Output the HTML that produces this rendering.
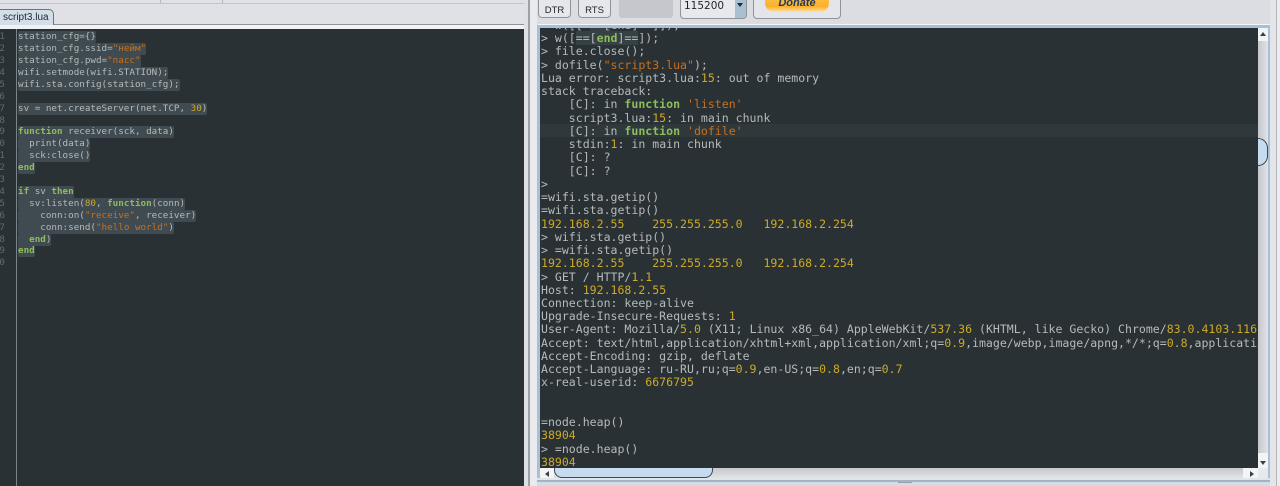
<!DOCTYPE html>
<html><head><meta charset="utf-8">
<style>
html,body{margin:0;padding:0;background:#dcdde3;width:1280px;height:486px;overflow:hidden}
.a{position:absolute}
#ed{left:0;top:29px;width:524px;height:457px;background:#293134;overflow:hidden}
#con{left:540px;top:28px;width:718px;height:440px;background:#293134;overflow:hidden}
.l,.g{position:absolute;white-space:pre;font-family:"DejaVu Sans Mono",monospace;color:#b6babA}
#ed .l{left:18px;font-size:9.25px;line-height:12px;height:12px;margin-top:1px;filter:blur(.35px)}
#ed .g{left:0;width:5px;text-align:right;font-size:9.25px;line-height:12px;margin-top:1px;color:#5f6b71;direction:rtl;overflow:hidden;filter:blur(.35px)}
#ed .s{background:#3f4b50;display:inline-block;height:12px;border-radius:2px}
#con .l{left:1px;font-size:11.55px;line-height:13px;height:13px;filter:blur(.35px)}
b{color:#8dbd5c;font-weight:bold}
i{font-style:normal;color:#c8701c}
u{text-decoration:none;color:#cdaa26}
em{font-style:normal;background:#364146}
</style></head><body>
<!-- top strip -->
<div class="a" style="left:0;top:0;width:524px;height:24px;background:#e0e1e6"></div>
<div class="a" style="left:0;top:3px;width:524px;height:1px;background:#c3c5ca"></div>
<div class="a" style="left:160px;top:0;width:1px;height:3px;background:#b4b6bb"></div>
<div class="a" style="left:222px;top:0;width:1px;height:3px;background:#b4b6bb"></div>
<div class="a" style="left:0;top:24px;width:524px;height:1px;background:#8f9297"></div>
<div class="a" style="left:0;top:25px;width:524px;height:4px;background:#f1f2f5"></div>
<!-- tab -->
<div class="a" style="left:-3px;top:9px;width:55px;height:15px;background:#d3deE8;border:1px solid #6f7378;border-bottom:none;border-radius:0 5px 0 0;font:10px/16px 'Liberation Sans',sans-serif;color:#1d2630;text-indent:5px;white-space:pre">script3.lua</div>
<!-- left editor -->
<div class="a" id="ed">
<div class="a" style="left:16px;top:0;width:1px;height:457px;background:#7b858a"></div>
<div class="g" style="top:1px">1</div><div class="g" style="top:13px">2</div><div class="g" style="top:25px">3</div><div class="g" style="top:37px">4</div><div class="g" style="top:49px">5</div><div class="g" style="top:61px">6</div><div class="g" style="top:73px">7</div><div class="g" style="top:85px">8</div><div class="g" style="top:96px">9</div><div class="g" style="top:108px">0</div><div class="g" style="top:120px">1</div><div class="g" style="top:132px">2</div><div class="g" style="top:144px">3</div><div class="g" style="top:156px">4</div><div class="g" style="top:168px">5</div><div class="g" style="top:180px">6</div><div class="g" style="top:192px">7</div><div class="g" style="top:204px">8</div><div class="g" style="top:215px">9</div><div class="g" style="top:227px">0</div>
<div class="l" style="top:1px"><span class="s">station_cfg={}</span></div>
<div class="l" style="top:13px"><span class="s">station_cfg.ssid=<i>"нейм"</i></span></div>
<div class="l" style="top:25px"><span class="s">station_cfg.pwd=<i>"пасс"</i></span></div>
<div class="l" style="top:37px"><span class="s">wifi.setmode(wifi.STATION);</span></div>
<div class="l" style="top:49px"><span class="s">wifi.sta.config(station_cfg);</span></div>
<div class="l" style="top:73px"><span class="s">sv = net.createServer(net.TCP, <u>30</u>)</span></div>
<div class="l" style="top:96px"><span class="s"><b>function</b> receiver(sck, data)</span></div>
<div class="l" style="top:108px"><span class="s">  print(data)</span></div>
<div class="l" style="top:120px"><span class="s">  sck:close()</span></div>
<div class="l" style="top:132px"><span class="s"><b>end</b></span></div>
<div class="l" style="top:156px"><span class="s"><b>if</b> sv <b>then</b></span></div>
<div class="l" style="top:168px"><span class="s">  sv:listen(<u>80</u>, <b>function</b>(conn)</span></div>
<div class="l" style="top:180px"><span class="s">    conn:on(<i>"receive"</i>, receiver)</span></div>
<div class="l" style="top:192px"><span class="s">    conn:send(<i>"hello world"</i>)</span></div>
<div class="l" style="top:204px"><span class="s">  <b>end</b>)</span></div>
<div class="l" style="top:215px"><span class="s"><b>end</b></span></div>
</div>
<!-- divider -->
<div class="a" style="left:524px;top:0;width:4px;height:486px;background:#dfe0e5"></div>
<div class="a" style="left:528px;top:0;width:2px;height:486px;background:#9da0a6"></div>
<div class="a" style="left:530px;top:0;width:7px;height:486px;background:#e9eaee"></div>
<!-- right top controls -->
<div class="a" style="left:538px;top:-6px;width:31px;height:22px;border:1px solid #8f9297;border-radius:4px;background:#e6e7eb;font:9.5px/9px 'Liberation Sans',sans-serif;color:#20252a"><div class="a" style="left:0;right:0;top:11px;text-align:center">DTR</div></div>
<div class="a" style="left:578px;top:-6px;width:31px;height:22px;border:1px solid #8f9297;border-radius:4px;background:#e6e7eb;font:9.5px/9px 'Liberation Sans',sans-serif;color:#20252a"><div class="a" style="left:0;right:0;top:11px;text-align:center">RTS</div></div>
<div class="a" style="left:619px;top:-4px;width:54px;height:22px;border-radius:3px;background:#c5c7cc"></div>
<div class="a" style="left:680px;top:-6px;width:65px;height:23px;border:1px solid #8f9297;border-radius:4px;background:#e8e9ed;overflow:hidden"><div class="a" style="left:3px;top:6px;font:10.5px/11px 'DejaVu Sans',sans-serif;color:#1f2428;white-space:pre">115200</div><div class="a" style="right:0;top:0;width:11px;height:23px;background:#a9bfd2"></div><div class="a" style="right:3px;top:8px;width:0;height:0;border:3px solid transparent;border-top:4px solid #1c2a3a"></div></div>
<div class="a" style="left:753px;top:-6px;width:86px;height:23px;border:1px solid #8f9297;border-radius:4px;background:#e4e5ea"></div>
<div class="a" style="left:765px;top:-6px;width:64px;height:18px;border-radius:0 0 9px 9px;background:linear-gradient(#fdc64e,#fbb02c 70%,#fde3a4);text-align:center;font:italic bold 11px/10px 'Liberation Sans',sans-serif;color:#23385f"><div class="a" style="left:0;right:0;top:4px;">Donate</div></div>
<!-- right frame -->
<div class="a" style="left:538px;top:24px;width:732px;height:1px;background:#f5f6f8"></div>
<div class="a" style="left:537px;top:25px;width:733px;height:3px;background:#a9bfd6"></div>
<div class="a" style="left:537px;top:25px;width:3px;height:457px;background:#a9bfd6"></div>
<div class="a" style="left:1268px;top:25px;width:2px;height:457px;background:#a9bfd6"></div>
<div class="a" style="left:1270px;top:0;width:6px;height:486px;background:#e4e5e9"></div>
<div class="a" style="left:1276px;top:0;width:1px;height:486px;background:#b3b6bc"></div>
<div class="a" style="left:1277px;top:0;width:3px;height:486px;background:#ebecf0"></div>
<div class="a" style="left:537px;top:478px;width:733px;height:3px;background:#e1e4e9"></div>
<div class="a" style="left:537px;top:480px;width:733px;height:2px;background:#a3b3c6"></div>
<div class="a" style="left:537px;top:482px;width:733px;height:4px;background:#d6dbe2"></div>
<div class="a" style="left:898px;top:482px;width:14px;height:1px;background:#9da0a6"></div>
<!-- console -->
<div class="a" id="con">
<div class="a" style="left:0;top:96px;width:718px;height:13px;background:#2f393c"></div>
<div class="l" style="top:-9px">  w([[ <em>==[</em>end]==]]);</div>
<div class="l" style="top:4px">&gt; w([<em>==[</em><b><em>end</em></b><em>]==</em>]);</div>
<div class="l" style="top:17px">&gt; file.close();</div>
<div class="l" style="top:31px">&gt; dofile(<i>"script3.lua"</i>);</div>
<div class="l" style="top:44px">Lua error: script3.lua:<u>15</u>: out of memory</div>
<div class="l" style="top:57px">stack traceback:</div>
<div class="l" style="top:70px">    [C]: in <b>function</b> <i>'listen'</i></div>
<div class="l" style="top:84px">    script3.lua:<u>15</u>: in main chunk</div>
<div class="l" style="top:97px">    [C]: in <b>function</b> <i>'dofile'</i></div>
<div class="l" style="top:110px">    stdin:<u>1</u>: in main chunk</div>
<div class="l" style="top:123px">    [C]: ?</div>
<div class="l" style="top:137px">    [C]: ?</div>
<div class="l" style="top:150px">&gt;</div>
<div class="l" style="top:163px">=wifi.sta.getip()</div>
<div class="l" style="top:176px">=wifi.sta.getip()</div>
<div class="l" style="top:190px"><u>192.168.2.55    255.255.255.0   192.168.2.254</u></div>
<div class="l" style="top:203px">&gt; wifi.sta.getip()</div>
<div class="l" style="top:216px">&gt; =wifi.sta.getip()</div>
<div class="l" style="top:229px"><u>192.168.2.55    255.255.255.0   192.168.2.254</u></div>
<div class="l" style="top:243px">&gt; GET / HTTP/<u>1.1</u></div>
<div class="l" style="top:256px">Host: <u>192.168.2.55</u></div>
<div class="l" style="top:269px">Connection: keep-alive</div>
<div class="l" style="top:282px">Upgrade-Insecure-Requests: <u>1</u></div>
<div class="l" style="top:295px">User-Agent: Mozilla/<u>5.0</u> (X11; Linux x86_64) AppleWebKit/<u>537.36</u> (KHTML, like Gecko) Chrome/<u>83.0.4103.116</u> Safari/<u>537.36</u></div>
<div class="l" style="top:309px">Accept: text/html,application/xhtml+xml,application/xml;q=<u>0.9</u>,image/webp,image/apng,*/*;q=<u>0.8</u>,application/signed-exchange</div>
<div class="l" style="top:322px">Accept-Encoding: gzip, deflate</div>
<div class="l" style="top:335px">Accept-Language: ru-RU,ru;q=<u>0.9</u>,en-US;q=<u>0.8</u>,en;q=<u>0.7</u></div>
<div class="l" style="top:348px">x-real-userid: <u>6676795</u></div>
<div class="l" style="top:388px">=node.heap()</div>
<div class="l" style="top:401px"><u>38904</u></div>
<div class="l" style="top:415px">&gt; =node.heap()</div>
<div class="l" style="top:428px"><u>38904</u></div>
</div>
<!-- vertical scrollbar -->
<div class="a" style="left:1258px;top:28px;width:10px;height:440px;background:linear-gradient(90deg,#c6c7cc,#e2e3e7)"></div>
<div class="a" style="left:1258px;top:28px;width:10px;height:13px;background:#f3f4f6"></div>
<div class="a" style="left:1260px;top:32px;width:0;height:0;border:3px solid transparent;border-bottom:4px solid #3c4044;border-top:none"></div>
<div class="a" style="left:1258px;top:138px;width:9px;height:26px;background:#c6dcee;border:1px solid #3c4a58;border-left:none;border-radius:0 10px 10px 0"></div>
<div class="a" style="left:1258px;top:453px;width:10px;height:15px;background:#f3f4f6"></div>
<div class="a" style="left:1260px;top:461px;width:0;height:0;border:3px solid transparent;border-top:4px solid #3c4044;border-bottom:none"></div>
<!-- horizontal scrollbar -->
<div class="a" style="left:540px;top:468px;width:718px;height:10px;background:linear-gradient(#c6c7cc,#e2e3e7)"></div>
<div class="a" style="left:540px;top:468px;width:14px;height:10px;background:#f3f4f6"></div>
<div class="a" style="left:545px;top:471px;width:0;height:0;border:3px solid transparent;border-right:4px solid #3c4044;border-left:none"></div>
<div class="a" style="left:554px;top:468px;width:157px;height:9px;background:#c6dcee;border:1px solid #3c4a58;border-top:none;border-radius:0 0 8px 8px"></div>
<div class="a" style="left:1243px;top:468px;width:15px;height:10px;background:#f3f4f6"></div>
<div class="a" style="left:1250px;top:471px;width:0;height:0;border:3px solid transparent;border-left:4px solid #3c4044;border-right:none"></div>
<div class="a" style="left:1258px;top:468px;width:10px;height:10px;background:#e6e9ee"></div>
</body></html>
